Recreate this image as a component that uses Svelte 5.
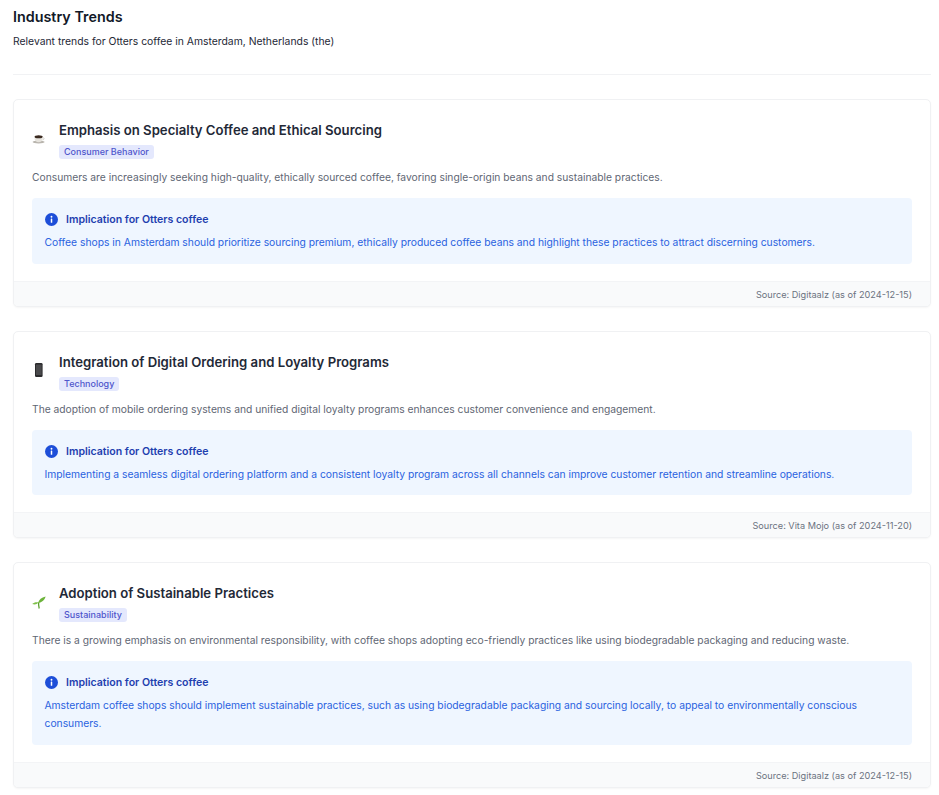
<script lang="ts">
	const trends = [
		{
			icon: 'coffee',
			title: 'Emphasis on Specialty Coffee and Ethical Sourcing',
			tag: 'Consumer Behavior',
			text: 'Consumers are increasingly seeking high-quality, ethically sourced coffee, favoring single-origin beans and sustainable practices.',
			implication: 'Coffee shops in Amsterdam should prioritize sourcing premium, ethically produced coffee beans and highlight these practices to attract discerning customers.',
			source: 'Source: Digitaalz (as of 2024-12-15)'
		},
		{
			icon: 'phone',
			title: 'Integration of Digital Ordering and Loyalty Programs',
			tag: 'Technology',
			text: 'The adoption of mobile ordering systems and unified digital loyalty programs enhances customer convenience and engagement.',
			implication: 'Implementing a seamless digital ordering platform and a consistent loyalty program across all channels can improve customer retention and streamline operations.',
			source: 'Source: Vita Mojo (as of 2024-11-20)'
		},
		{
			icon: 'sprout',
			title: 'Adoption of Sustainable Practices',
			tag: 'Sustainability',
			text: 'There is a growing emphasis on environmental responsibility, with coffee shops adopting eco-friendly practices like using biodegradable packaging and reducing waste.',
			implication: 'Amsterdam coffee shops should implement sustainable practices, such as using biodegradable packaging and sourcing locally, to appeal to environmentally conscious consumers.',
			source: 'Source: Digitaalz (as of 2024-12-15)'
		}
	];
</script>

<div class="page">
	<header class="page-header">
		<h1>Industry Trends</h1>
		<p>Relevant trends for Otters coffee in Amsterdam, Netherlands (the)</p>
	</header>

	{#each trends as trend}
		<article class="card">
			<div class="card-body">
				<div class="card-head">
					<span class="emoji">
						{#if trend.icon === 'coffee'}
							<svg viewBox="0 0 14 14" width="14" height="14">
								<ellipse cx="6.6" cy="10" rx="6" ry="1.5" fill="#b9b5ae" />
								<path d="M2.6 4.6h8v2.4c0 2-1.8 3.2-4 3.2s-4-1.2-4-3.2z" fill="#e6e3dd" />
								<ellipse cx="6.6" cy="4.8" rx="4" ry="1.5" fill="#3a2a20" />
								<path d="M10.6 5.6c1.6-.2 2 1.8.1 2.4" fill="none" stroke="#cfcbc4" stroke-width="1" />
							</svg>
						{:else if trend.icon === 'phone'}
							<svg viewBox="0 0 14 14" width="14" height="14">
								<rect x="3" y="0" width="7.6" height="14" rx="1.3" fill="#2b2b2d" />
								<rect x="4" y="1.6" width="5.6" height="10.4" fill="#4a4a4c" />
							</svg>
						{:else}
							<svg viewBox="0 0 14 14" width="14" height="14">
								<path d="M6.6 7.5C6.4 9.5 6.8 11.5 7.2 13.5" fill="none" stroke="#5da130" stroke-width="1.3" />
								<path d="M6 8C7 4.5 9.5 2.5 13.6 1.5 13 4.5 10 7.5 6 8z" fill="#6cb33a" />
								<path d="M6.5 7.5C4.5 6.8 2 7.2.2 9 2.5 10 5 9.5 6.5 7.5z" fill="#7fc04a" />
							</svg>
						{/if}
					</span>
					<div class="heading">
						<h2>{trend.title}</h2>
						<span class="tag">{trend.tag}</span>
					</div>
				</div>
				<p class="desc">{trend.text}</p>
				<div class="implication">
					<div class="implication-title">
						<svg class="info" viewBox="0 0 14 14" width="13" height="13">
							<circle cx="7" cy="7" r="7" fill="#1d4ed8" />
							<rect x="6.2" y="6" width="1.6" height="4.6" rx="0.5" fill="#fff" />
							<circle cx="7" cy="4" r="1" fill="#fff" />
						</svg>
						<span>Implication for Otters coffee</span>
					</div>
					<p>{trend.implication}</p>
				</div>
			</div>
			<footer class="card-foot">{trend.source}</footer>
		</article>
	{/each}
</div>

<style>
	:global(body) {
		margin: 0;
		background: #fff;
		font-family: Inter, "Liberation Sans", sans-serif;
	}

	.page {
		padding: 8px 8px 0 13px;
	}

	.page-header {
		border-bottom: 1px solid #f1f2f4;
		padding-bottom: 25px;
		margin-bottom: 24px;
	}

	.page-header h1 {
		margin: 0;
		font-size: 14.35px;
		line-height: 17px;
		font-weight: 600;
		color: #111827;
	}

	.page-header p {
		margin: 10px 0 0;
		font-size: 10.37px;
		line-height: 14px;
		color: #1f2937;
	}

	.card {
		border: 1px solid #f0f1f3;
		border-radius: 5px;
		background: #fff;
		box-shadow: 0 1px 2px rgba(0, 0, 0, 0.04);
		margin-bottom: 24px;
		overflow: hidden;
	}

	.card-body {
		padding: 22px 18px 17px;
	}

	.card-head {
		display: flex;
		align-items: center;
		gap: 13px;
	}

	.emoji {
		display: flex;
		width: 14px;
		height: 14px;
		flex: none;
		margin-bottom: 4px;
	}

	.heading {
		display: flex;
		flex-direction: column;
		align-items: flex-start;
		gap: 7px;
	}

	.heading h2 {
		margin: 0;
		font-size: 13.15px;
		line-height: 16px;
		font-weight: 600;
		color: #1f2937;
	}

	.tag {
		background: #e4e8fd;
		color: #4f56cc;
		font-size: 9px;
		font-weight: 500;
		line-height: 14px;
		padding: 0 5px;
		border-radius: 3px;
	}

	.desc {
		margin: 11px 0 0;
		font-size: 10.27px;
		line-height: 14px;
		color: #5f6774;
	}

	.implication {
		margin-top: 14px;
		background: #eff6ff;
		border-radius: 4px;
		padding: 15px 13px 12.5px;
	}

	.implication-title {
		display: flex;
		align-items: center;
		gap: 8px;
		font-size: 10.56px;
		line-height: 14px;
		font-weight: 600;
		color: #1e40af;
	}

	.info {
		margin-bottom: 1px;
	}

	.implication p {
		margin: 6px 0 0 -0.5px;
		font-size: 10.3px;
		line-height: 18px;
		color: #2a62e0;
	}

	.card-foot {
		background: #f9fafb;
		border-top: 1px solid #f3f4f6;
		padding: 6px 18px 5px;
		text-align: right;
		font-size: 9.17px;
		line-height: 13px;
		color: #6b7280;
	}
</style>
